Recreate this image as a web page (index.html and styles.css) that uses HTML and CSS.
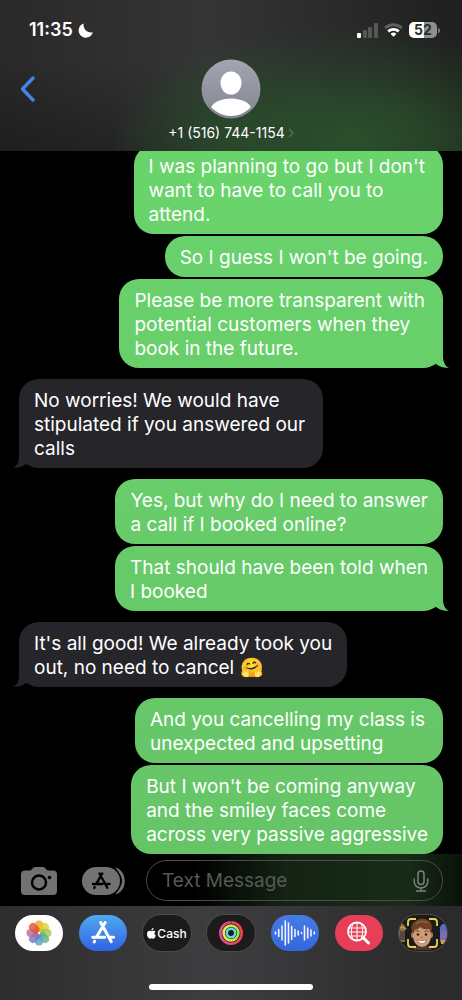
FILE: index.html
```html
<!DOCTYPE html>
<html lang="en">
<head>
<meta charset="utf-8">
<meta name="viewport" content="width=device-width, initial-scale=1">
<title>Messages</title>
<link rel="stylesheet" href="styles.css">
</head>
<body>
<div class="phone">
  <header class="header">
    <div class="status">
      <div class="status-left">
        <span class="clock">11:35</span>
        <svg class="moon" viewBox="0 0 15 15" aria-hidden="true"><path d="M5.600.6A7.200 7.200 0 1 0 14.800 9.200C10 10.500 4.800 6.500 5.600.6Z" fill="#fff"/></svg>
      </div>
      <div class="status-right">
        <svg class="signal" viewBox="0 0 21 15" aria-hidden="true">
          <rect x="0" y="10" width="4" height="5" rx="1" fill="#fff"/>
          <rect x="6" y="7" width="4" height="8" rx="1" fill="#555756"/>
          <rect x="11" y="4" width="4" height="11" rx="1" fill="#555756"/>
          <rect x="17" y="0" width="4" height="15" rx="1" fill="#555756"/>
        </svg>
        <svg class="wifi" viewBox="0 0 19 14" aria-hidden="true">
          <path d="M1.200 5.100a12 12 0 0 1 16.600 0" fill="none" stroke="#5c5f5d" stroke-width="2.800"/>
          <path d="M4.200 8.400a7.800 7.800 0 0 1 10.600 0" fill="none" stroke="#fff" stroke-width="2.800"/>
          <path d="M9.500 13.800 6.600 11a4.200 4.200 0 0 1 5.800 0Z" fill="#fff"/>
        </svg>
        <div class="battery"><span class="battery-body">52</span><span class="battery-cap"></span></div>
      </div>
    </div>
    <div class="contact-row">
      <button class="back" aria-label="Back">
        <svg viewBox="0 0 16 26" aria-hidden="true"><path d="M13 2 2.500 13 13 24" fill="none" stroke="#4383ec" stroke-width="3.400" stroke-linecap="round" stroke-linejoin="round"/></svg>
      </button>
      <button class="contact">
        <svg class="avatar" viewBox="0 0 60 60" aria-hidden="true">
          <defs>
            <linearGradient id="av" x1="0" y1="0" x2="0" y2="1"><stop offset="0" stop-color="#a3a6b1"/><stop offset="1" stop-color="#82848f"/></linearGradient>
            <clipPath id="avc"><circle cx="30" cy="30" r="27"/></clipPath>
          </defs>
          <circle cx="30" cy="30" r="29.500" fill="url(#av)"/>
          <ellipse cx="30" cy="24" rx="10.500" ry="11.500" fill="#fff"/>
          <ellipse cx="30" cy="51" rx="20.500" ry="11.500" fill="#fff" clip-path="url(#avc)"/>
        </svg>
        <span class="number">+1 (516) 744-1154
          <svg class="chevron" viewBox="0 0 6 10" aria-hidden="true"><path d="m1 1 4 4-4 4" fill="none" stroke="#58705a" stroke-width="1.400"/></svg>
        </span>
      </button>
    </div>
  </header>

  <main class="thread">
    <div class="group sent">
      <p class="bubble roomy">I was planning to go but I don't<br>want to have to call you to<br>attend.</p>
      <p class="bubble">So I guess I won't be going.</p>
      <p class="bubble roomy tail">Please be more transparent with<br>potential customers when they<br>book in the future.</p>
    </div>
    <div class="group received">
      <p class="bubble roomy tail">No worries! We would have<br>stipulated if you answered our<br>calls</p>
    </div>
    <div class="group sent">
      <p class="bubble">Yes, but why do I need to answer<br>a call if I booked online?</p>
      <p class="bubble tail">That should have been told when<br>I booked</p>
    </div>
    <div class="group received">
      <p class="bubble tail">It's all good! We already took you<br>out, no need to cancel <span class="emoji">🤗</span></p>
    </div>
    <div class="group sent">
      <p class="bubble roomy">And you cancelling my class is<br>unexpected and upsetting</p>
      <p class="bubble">But I won't be coming anyway<br>and the smiley faces come<br>across very passive aggressive</p>
    </div>
  </main>

  <form class="composer">
    <button type="button" class="camera" aria-label="Camera">
      <svg viewBox="0 0 36 28" aria-hidden="true">
        <path d="M4 3.500H9.500L12 1Q13 0 14.500 0H21.500Q23 0 24 1L26.500 3.500H32Q36 3.500 36 7.500V24Q36 28 32 28H4Q0 28 0 24V7.500Q0 3.500 4 3.500Z" fill="#727274"/>
        <circle cx="18" cy="15.500" r="7" fill="none" stroke="#000" stroke-width="2.500"/>
        <circle cx="28.500" cy="10.500" r="1.800" fill="#000"/>
      </svg>
    </button>
    <button type="button" class="apps" aria-label="Apps">
      <svg viewBox="0 0 44 28" aria-hidden="true">
        <path d="M33 .5C46 3 46 25 33 27.500Q40 20 40 14 40 8 33 .5Z" fill="#727274"/>
        <rect width="38" height="28" rx="14" fill="#727274"/>
        <g stroke="#000" stroke-width="2.400" stroke-linecap="round" fill="none">
          <path d="m17.500 6.500 7.800 14.300M20.300 6.500 14.300 16.800M11 17h9.500M24.500 17h3M12.700 20l-.5.900"/>
        </g>
      </svg>
    </button>
    <div class="field">
      <input type="text" placeholder="Text Message" aria-label="Text Message">
      <button type="button" class="mic" aria-label="Dictate">
        <svg viewBox="0 0 16 22" fill="none" stroke="#7b827c" stroke-width="1.500" stroke-linecap="round" aria-hidden="true">
          <rect x="5" y="1" width="6" height="13.500" rx="3"/>
          <path d="M1.200 9v2.500a6.800 6.500 0 0 0 13.600 0V9M8 18v3M3.500 21h9"/>
        </svg>
      </button>
    </div>
  </form>

  <footer class="dock">
    <nav class="dock-apps" aria-label="iMessage apps">
      <button class="app photos" aria-label="Photos">
        <svg viewBox="0 0 48 36" aria-hidden="true">
          <g transform="translate(24 18)" fill-opacity=".8">
            <rect x="-4" y="-12.500" width="8" height="11.500" rx="4" fill="#f5a11c"/>
            <rect x="-4" y="-12.500" width="8" height="11.500" rx="4" fill="#d9ce2e" transform="rotate(45)"/>
            <rect x="-4" y="-12.500" width="8" height="11.500" rx="4" fill="#a4c64a" transform="rotate(90)"/>
            <rect x="-4" y="-12.500" width="8" height="11.500" rx="4" fill="#58b184" transform="rotate(135)"/>
            <rect x="-4" y="-12.500" width="8" height="11.500" rx="4" fill="#579cca" transform="rotate(180)"/>
            <rect x="-4" y="-12.500" width="8" height="11.500" rx="4" fill="#7378be" transform="rotate(225)"/>
            <rect x="-4" y="-12.500" width="8" height="11.500" rx="4" fill="#b9679c" transform="rotate(270)"/>
            <rect x="-4" y="-12.500" width="8" height="11.500" rx="4" fill="#e84c3b" transform="rotate(315)"/>
          </g>
        </svg>
      </button>
      <button class="app store" aria-label="App Store">
        <svg viewBox="0 0 48 36" fill="none" stroke="#fff" stroke-width="3" stroke-linecap="round" aria-hidden="true">
          <path d="m21.700 7.500 10.600 19.200M26.200 7.500 17.500 22M13.700 22.300h12M31 22.300h3.600M15.700 26.200l-.5.800"/>
        </svg>
      </button>
      <button class="app cash" aria-label="Apple Cash">
        <svg class="apple" viewBox="0 0 10 12" fill="#fff" aria-hidden="true"><path d="M7.200 0C7.300 1.500 6.100 2.800 4.800 2.700 4.700 1.400 5.800.2 7.200 0ZM9.400 4.200C7.700 5.200 7.900 7.400 9.800 8.200 9.200 10 8.100 11.700 7 11.700 6.300 11.700 6 11.300 5.200 11.300 4.400 11.300 4 11.700 3.400 11.700 1.700 11.700 0 8.900 0 6.500 0 4.200 1.400 3 2.900 3 3.800 3 4.500 3.500 5.100 3.500 5.700 3.500 6.400 2.900 7.500 2.900 8.300 2.900 9 3.500 9.400 4.200Z"/></svg>
        <span>Cash</span>
      </button>
      <button class="app fitness" aria-label="Fitness">
        <svg viewBox="0 0 48 36" fill="none" stroke-width="2.600" aria-hidden="true">
          <defs>
            <linearGradient id="r1"><stop stop-color="#e64aa0"/><stop offset="1" stop-color="#ed4444"/></linearGradient>
            <linearGradient id="r2"><stop stop-color="#f2e84a"/><stop offset="1" stop-color="#a8e04c"/></linearGradient>
          </defs>
          <circle cx="24" cy="18" r="10.700" stroke="url(#r1)"/>
          <circle cx="24" cy="18" r="7.400" stroke="url(#r2)"/>
          <circle cx="24" cy="18" r="4.200" stroke="#5bdce0"/>
          <path d="M24 6v3" stroke="#7c233a" stroke-width="1"/>
        </svg>
      </button>
      <button class="app audio" aria-label="Audio">
        <svg viewBox="0 0 48 36" stroke="#eef3ff" stroke-width="1.600" stroke-linecap="round" aria-hidden="true">
          <path d="M4.500 17v2M7.700 14.500v7M11 11v14M14.300 6v24M17.500 8v20M20.700 11.500v13M24 14.500v7M27.200 16v4M30.500 17.500v1M33.500 11v14M36.700 13v10M40 15v6M43.300 17v2"/>
        </svg>
      </button>
      <button class="app images" aria-label="#images">
        <svg viewBox="0 0 48 36" fill="none" stroke="#fff" aria-hidden="true">
          <circle cx="22" cy="16.500" r="9" stroke-width="1.800"/>
          <path d="M13.500 13h17M13 17h18M14 21h16M22 8v17M18 8.500q-3.500 8 0 16M26 8.500q3.500 8 0 16" stroke-width="1"/>
          <path d="m28.500 23 5 5" stroke-width="3" stroke-linecap="round"/>
        </svg>
      </button>
      <button class="app memoji" aria-label="Memoji">
        <svg viewBox="0 0 48 36" aria-hidden="true">
          <path d="M0 11Q3 5 6 12V27H0Z" fill="#82704a"/><path d="M1 16h5v9H1Z" fill="#5e453b"/><path d="M1 13q3-2 6 1" stroke="#c19b39" stroke-width="2" fill="none"/>
          <path d="M48 10Q42 7 41 13V27H48Z" fill="#596fc5"/><path d="M42 16h6v8h-6Z" fill="#866aac"/><path d="M42 25h6v4h-6Z" fill="#d0a13f"/>
          <path d="M14 35q1-5 9-5t10 5Z" fill="#4b392d"/>
          <ellipse cx="14" cy="20" rx="2" ry="3" fill="#b07a5c"/><ellipse cx="32" cy="20" rx="2" ry="3" fill="#b07a5c"/>
          <path d="M14 14Q15 9 23 9T32 14V22Q31 31 23 32 15 31 14 22Z" fill="#cf9a78"/>
          <path d="M14 19Q10 11 15 7 22 1 29 5 35 8 32 19L30 14Q24 15 21 12 19 15 16 15Z" fill="#704124"/>
          <path d="M17 9Q22 4 29 8" fill="none" stroke="#996038" stroke-width="1.500"/>
          <path d="M16.500 16.500q2-1.500 4 0M25.500 16.500q2-1.500 4 0" fill="none" stroke="#65402b"/>
          <circle cx="19" cy="19.500" r="1.300" fill="#332620"/><circle cx="27" cy="19.500" r="1.300" fill="#332620"/>
          <path d="M22 22q1 1 2 0" stroke="#a36448" fill="none"/><path d="M18.500 25q4.500 1.500 9 0-1 3.500-4.500 3.500t-4.500-3.500Z" fill="#fff" stroke="#985242" stroke-width=".6"/>
          <path d="M9 11V7q0-3 3-3h5M30 4h5q3 0 3 3v4M38 24v5q0 3-3 3h-5M17 32h-5q-3 0-3-3v-5" fill="none" stroke="#e9d34e" stroke-width="1.800"/>
        </svg>
      </button>
    </nav>
    <div class="home-indicator"></div>
  </footer>
</div>
</body>
</html>
```
FILE: styles.css
```css
* { box-sizing: border-box; }

body {
  margin: 0;
  background: #000;
  color: #fff;
  font-family: Inter, "Liberation Sans", sans-serif;
}

button {
  display: block;
  margin: 0;
  padding: 0;
  border: 0;
  background: none;
  color: inherit;
  font: inherit;
}

svg { display: block; }

.phone {
  display: flex;
  flex-direction: column;
  height: 100vh;
}

/* Header */
.header {
  flex: none;
  padding: 19px 22px 10px 20px;
  background:
    radial-gradient(ellipse 52% 76% at 76% 92%, #2b502c 0%, #2b502cbb 35%, #2b502c44 70%, #2b502c00 100%),
    radial-gradient(ellipse 26% 60% at 50% 90%, #284a2aaa 0%, #284a2a55 50%, #284a2a00 100%),
    linear-gradient(#00000000 40%, #00000044),
    linear-gradient(90deg, #29292a, #353536 45%, #1f1f1f);
}

.status {
  display: flex;
  justify-content: space-between;
  align-items: center;
  height: 22px;
  padding-left: 9px;
}

.status-left,
.status-right {
  display: flex;
  align-items: center;
}

.status-left { gap: 5px; }
.status-right { gap: 6px; }

.clock {
  font-size: 18px;
  font-weight: 600;
  line-height: 22px;
}

.moon { width: 15px; height: 15px; }
.signal { width: 21px; height: 15px; }
.wifi { width: 19px; height: 14px; }

.battery {
  display: flex;
  align-items: center;
  gap: 1px;
}

.battery-body {
  width: 28px;
  height: 16px;
  border-radius: 5px;
  background: linear-gradient(90deg, #fff 52%, #8e908f 52%);
  color: #2b2e2c;
  font-size: 14px;
  font-weight: 700;
  line-height: 16px;
  text-align: center;
}

.battery-cap {
  width: 2px;
  height: 5px;
  border-radius: 0 2px 2px 0;
  background: #777a78;
}

.contact-row {
  display: grid;
  grid-template-columns: 16px 1fr 14px;
  padding-top: 18px;
}

.back { align-self: start; padding-top: 17px; }
.back svg { width: 16px; height: 26px; }

.contact {
  display: flex;
  flex-direction: column;
  align-items: center;
  gap: 5px;
}

.avatar { width: 60px; height: 60px; }

.number {
  display: flex;
  align-items: center;
  gap: 3px;
  font-size: 14px;
  line-height: 17px;
}

.chevron { width: 6px; height: 10px; }

/* Conversation */
.thread {
  display: flex;
  flex: 1;
  flex-direction: column;
  justify-content: flex-end;
  gap: 11px;
  min-height: 0;
  padding: 0 19px;
  overflow: hidden;
}

.group {
  display: flex;
  flex-direction: column;
  gap: 2px;
}

.sent { align-items: flex-end; }
.received { align-items: flex-start; }

.bubble {
  position: relative;
  margin: 0;
  padding: 10px 15px 7px;
  border-radius: 20px;
  font-size: 19px;
  line-height: 24px;
}

.roomy { padding-right: 18px; }

.sent .bubble,
.sent .tail::after {
  background: linear-gradient(#6ad76d, #65c166) fixed;
}

.received .bubble,
.received .tail::after {
  background: #26252a;
}

.tail::after {
  content: "";
  position: absolute;
  right: -6px;
  bottom: 0;
  width: 20px;
  height: 20px;
  clip-path: path("M0 0H14V8C14 14 16 18 20 20C16 20 11 19 7 16L0 18Z");
}

.received .tail::after {
  right: auto;
  left: -6px;
  transform: scaleX(-1);
}

/* Composer */
.composer {
  display: flex;
  flex: none;
  align-items: center;
  padding: 6px 19px 5px 21px;
  background: linear-gradient(90deg, #000 42%, #142314 62%, #182b18 88%, #0a120a);
}

.camera svg { width: 36px; height: 28px; }
.apps { margin-left: 25px; }
.apps svg { width: 44px; height: 28px; }

.field {
  display: flex;
  flex: 1;
  align-items: center;
  min-width: 0;
  height: 41px;
  margin-left: 20px;
  padding: 0 13px 0 15px;
  border: 1px solid #4a4d4b;
  border-radius: 21px;
}

.field input {
  flex: 1;
  min-width: 0;
  padding: 0;
  border: 0;
  outline: 0;
  background: none;
  color: #fff;
  font: 19px/24px Inter, "Liberation Sans", sans-serif;
}

.field input::placeholder { color: #565957; opacity: 1; }
.mic svg { width: 16px; height: 22px; }

/* App drawer */
.dock {
  flex: none;
  padding: 9px 15px 10px;
  background: linear-gradient(90deg, #2d2d2e, #3d3d3f 45%, #39393b 60%, #2b2b2c 90%);
}

.dock-apps {
  display: flex;
  justify-content: space-between;
}

.app {
  display: flex;
  align-items: center;
  justify-content: center;
  width: 48px;
  height: 36px;
  border-radius: 18px;
  overflow: hidden;
}

.app > svg { flex: none; width: 48px; height: 36px; }
.photos { background: #fff; }
.store { background: linear-gradient(#50a9ef, #3162e4); }
.cash, .fitness, .memoji { background: #1b1b1c; box-shadow: 0 0 0 1px #4a4a4b; }
.audio { background: linear-gradient(#467be6, #3466dc); }
.images { background: #e73f58; }

.cash {
  gap: 1px;
  font-size: 12px;
  font-weight: 500;
}

.cash > .apple { width: 9px; height: 11px; }

.home-indicator {
  width: 38%;
  height: 6px;
  margin: 33px auto 0;
  border-radius: 3px;
  background: #fff;
}
```
